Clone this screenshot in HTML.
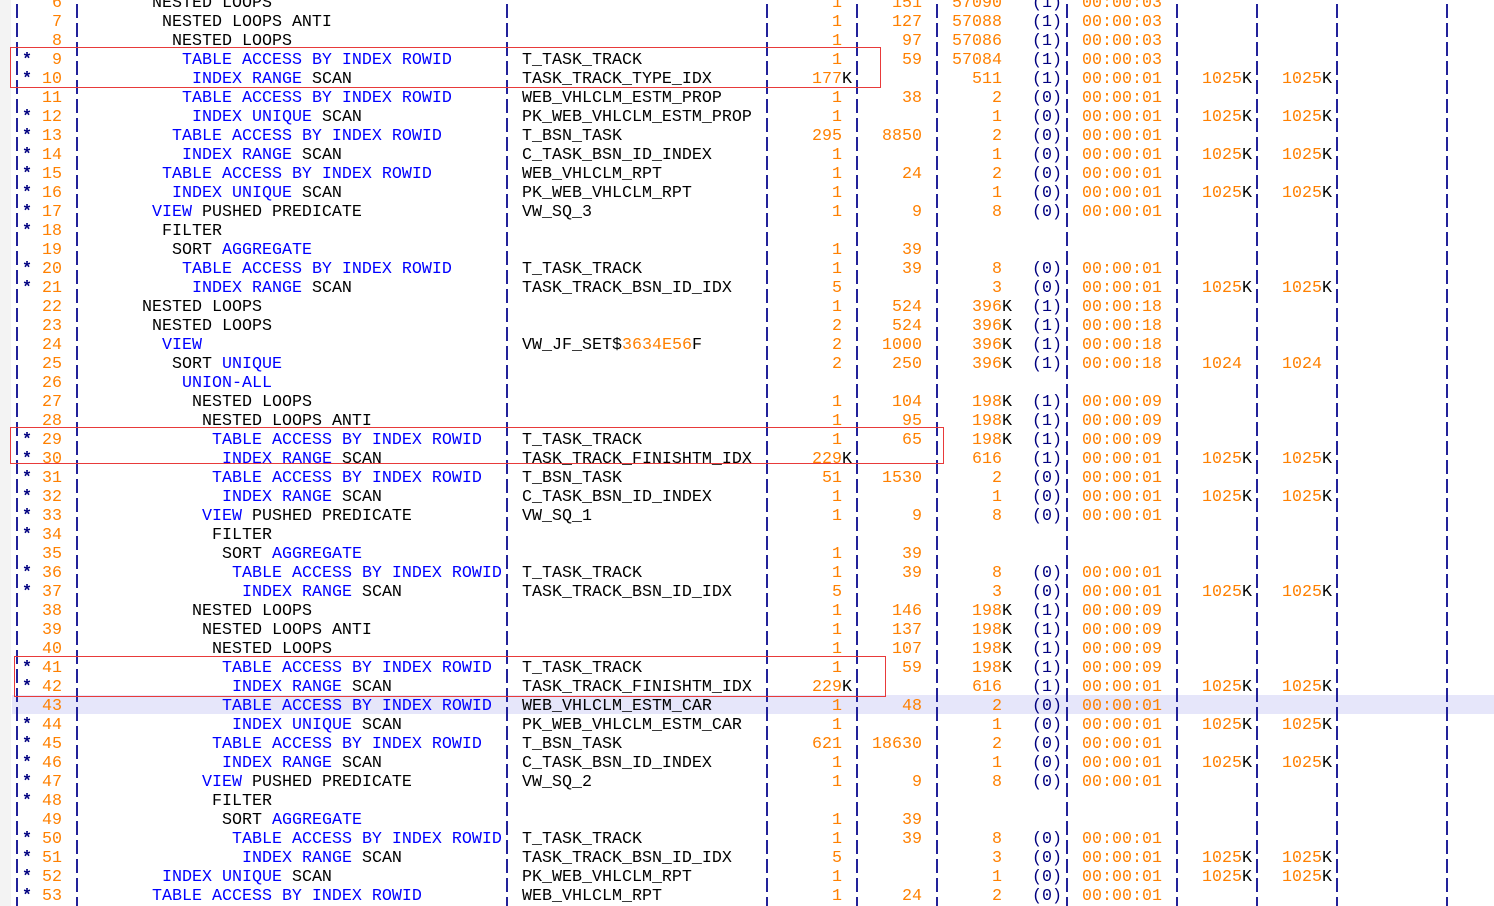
<!DOCTYPE html>
<html><head><meta charset="utf-8"><style>
html,body{margin:0;padding:0;background:#fff;width:1494px;height:906px;overflow:hidden;position:relative}
.m{position:absolute;left:0;top:0;width:11px;height:906px;background:#f3f3f3}
.hl{position:absolute;left:12px;top:694.5px;width:1482px;height:19px;background:#e6e6fa}
.w{position:absolute;left:0;top:-6.5px;width:1494px;font-family:"Liberation Mono","Courier New",monospace;font-size:16.667px;line-height:19px}
.r{position:relative;height:19px;white-space:pre}
.r span,.r i,.r b{position:absolute;top:0;font-style:normal;font-weight:normal;white-space:pre}
.r i{left:22px;color:#000080;font-weight:bold}
.r b{left:32px;width:30px;text-align:right;color:#ff8000}
em{font-style:normal;color:#0000ff}
u{text-decoration:none;color:#000}
.o{color:#000}
.nm{left:522px;color:#000}
.ro{left:772px;width:80px;text-align:right;color:#ff8000}
.by{left:862px;width:60px;text-align:right;color:#ff8000}
.co{left:942px;width:70px;text-align:right;color:#ff8000}
.pc{left:1032px;color:#000080}
.tm{left:1082px;color:#ff8000}
.c1{left:1182px;width:70px;text-align:right;color:#ff8000}
.c2{left:1262px;width:70px;text-align:right;color:#ff8000}
.n{color:#ff8000}
.p{position:absolute;top:0;width:2px;height:906px;background:repeating-linear-gradient(to bottom,transparent 0,transparent 4px,#22229a 4px,#22229a 18px,transparent 18px,transparent 19px)}
.bx{position:absolute;border:1px solid #e83a3a}
</style></head><body>
<div class="m"></div>
<div class="hl"></div>
<div class="p" style="left:16px"></div><div class="p" style="left:76px"></div><div class="p" style="left:506px"></div><div class="p" style="left:766px"></div><div class="p" style="left:856px"></div><div class="p" style="left:936px"></div><div class="p" style="left:1066px"></div><div class="p" style="left:1176px"></div><div class="p" style="left:1256px"></div><div class="p" style="left:1336px"></div><div class="p" style="left:1446px"></div>
<div class="w">
<div class="r"><b>6</b><span class="o" style="left:152px">NESTED LOOPS</span><span class="ro">1 </span><span class="by">151</span><span class="co">57090 </span><span class="pc">(1)</span><span class="tm">00:00:03</span></div>
<div class="r"><b>7</b><span class="o" style="left:162px">NESTED LOOPS ANTI</span><span class="ro">1 </span><span class="by">127</span><span class="co">57088 </span><span class="pc">(1)</span><span class="tm">00:00:03</span></div>
<div class="r"><b>8</b><span class="o" style="left:172px">NESTED LOOPS</span><span class="ro">1 </span><span class="by">97</span><span class="co">57086 </span><span class="pc">(1)</span><span class="tm">00:00:03</span></div>
<div class="r"><i>*</i><b>9</b><span class="o" style="left:182px"><em>TABLE ACCESS BY INDEX ROWID</em></span><span class="nm">T_TASK_TRACK</span><span class="ro">1 </span><span class="by">59</span><span class="co">57084 </span><span class="pc">(1)</span><span class="tm">00:00:03</span></div>
<div class="r"><i>*</i><b>10</b><span class="o" style="left:192px"><em>INDEX RANGE</em> SCAN</span><span class="nm">TASK_TRACK_TYPE_IDX</span><span class="ro">177<u>K</u></span><span class="co">511 </span><span class="pc">(1)</span><span class="tm">00:00:01</span><span class="c1">1025<u>K</u></span><span class="c2">1025<u>K</u></span></div>
<div class="r"><b>11</b><span class="o" style="left:182px"><em>TABLE ACCESS BY INDEX ROWID</em></span><span class="nm">WEB_VHLCLM_ESTM_PROP</span><span class="ro">1 </span><span class="by">38</span><span class="co">2 </span><span class="pc">(0)</span><span class="tm">00:00:01</span></div>
<div class="r"><i>*</i><b>12</b><span class="o" style="left:192px"><em>INDEX UNIQUE</em> SCAN</span><span class="nm">PK_WEB_VHLCLM_ESTM_PROP</span><span class="ro">1 </span><span class="co">1 </span><span class="pc">(0)</span><span class="tm">00:00:01</span><span class="c1">1025<u>K</u></span><span class="c2">1025<u>K</u></span></div>
<div class="r"><i>*</i><b>13</b><span class="o" style="left:172px"><em>TABLE ACCESS BY INDEX ROWID</em></span><span class="nm">T_BSN_TASK</span><span class="ro">295 </span><span class="by">8850</span><span class="co">2 </span><span class="pc">(0)</span><span class="tm">00:00:01</span></div>
<div class="r"><i>*</i><b>14</b><span class="o" style="left:182px"><em>INDEX RANGE</em> SCAN</span><span class="nm">C_TASK_BSN_ID_INDEX</span><span class="ro">1 </span><span class="co">1 </span><span class="pc">(0)</span><span class="tm">00:00:01</span><span class="c1">1025<u>K</u></span><span class="c2">1025<u>K</u></span></div>
<div class="r"><i>*</i><b>15</b><span class="o" style="left:162px"><em>TABLE ACCESS BY INDEX ROWID</em></span><span class="nm">WEB_VHLCLM_RPT</span><span class="ro">1 </span><span class="by">24</span><span class="co">2 </span><span class="pc">(0)</span><span class="tm">00:00:01</span></div>
<div class="r"><i>*</i><b>16</b><span class="o" style="left:172px"><em>INDEX UNIQUE</em> SCAN</span><span class="nm">PK_WEB_VHLCLM_RPT</span><span class="ro">1 </span><span class="co">1 </span><span class="pc">(0)</span><span class="tm">00:00:01</span><span class="c1">1025<u>K</u></span><span class="c2">1025<u>K</u></span></div>
<div class="r"><i>*</i><b>17</b><span class="o" style="left:152px"><em>VIEW</em> PUSHED PREDICATE</span><span class="nm">VW_SQ_3</span><span class="ro">1 </span><span class="by">9</span><span class="co">8 </span><span class="pc">(0)</span><span class="tm">00:00:01</span></div>
<div class="r"><i>*</i><b>18</b><span class="o" style="left:162px">FILTER</span></div>
<div class="r"><b>19</b><span class="o" style="left:172px">SORT <em>AGGREGATE</em></span><span class="ro">1 </span><span class="by">39</span></div>
<div class="r"><i>*</i><b>20</b><span class="o" style="left:182px"><em>TABLE ACCESS BY INDEX ROWID</em></span><span class="nm">T_TASK_TRACK</span><span class="ro">1 </span><span class="by">39</span><span class="co">8 </span><span class="pc">(0)</span><span class="tm">00:00:01</span></div>
<div class="r"><i>*</i><b>21</b><span class="o" style="left:192px"><em>INDEX RANGE</em> SCAN</span><span class="nm">TASK_TRACK_BSN_ID_IDX</span><span class="ro">5 </span><span class="co">3 </span><span class="pc">(0)</span><span class="tm">00:00:01</span><span class="c1">1025<u>K</u></span><span class="c2">1025<u>K</u></span></div>
<div class="r"><b>22</b><span class="o" style="left:142px">NESTED LOOPS</span><span class="ro">1 </span><span class="by">524</span><span class="co">396<u>K</u></span><span class="pc">(1)</span><span class="tm">00:00:18</span></div>
<div class="r"><b>23</b><span class="o" style="left:152px">NESTED LOOPS</span><span class="ro">2 </span><span class="by">524</span><span class="co">396<u>K</u></span><span class="pc">(1)</span><span class="tm">00:00:18</span></div>
<div class="r"><b>24</b><span class="o" style="left:162px"><em>VIEW</em></span><span class="nm">VW_JF_SET$<span class="n" style="position:static">3634E56</span>F</span><span class="ro">2 </span><span class="by">1000</span><span class="co">396<u>K</u></span><span class="pc">(1)</span><span class="tm">00:00:18</span></div>
<div class="r"><b>25</b><span class="o" style="left:172px">SORT <em>UNIQUE</em></span><span class="ro">2 </span><span class="by">250</span><span class="co">396<u>K</u></span><span class="pc">(1)</span><span class="tm">00:00:18</span><span class="c1">1024 </span><span class="c2">1024 </span></div>
<div class="r"><b>26</b><span class="o" style="left:182px"><em>UNION-ALL</em></span></div>
<div class="r"><b>27</b><span class="o" style="left:192px">NESTED LOOPS</span><span class="ro">1 </span><span class="by">104</span><span class="co">198<u>K</u></span><span class="pc">(1)</span><span class="tm">00:00:09</span></div>
<div class="r"><b>28</b><span class="o" style="left:202px">NESTED LOOPS ANTI</span><span class="ro">1 </span><span class="by">95</span><span class="co">198<u>K</u></span><span class="pc">(1)</span><span class="tm">00:00:09</span></div>
<div class="r"><i>*</i><b>29</b><span class="o" style="left:212px"><em>TABLE ACCESS BY INDEX ROWID</em></span><span class="nm">T_TASK_TRACK</span><span class="ro">1 </span><span class="by">65</span><span class="co">198<u>K</u></span><span class="pc">(1)</span><span class="tm">00:00:09</span></div>
<div class="r"><i>*</i><b>30</b><span class="o" style="left:222px"><em>INDEX RANGE</em> SCAN</span><span class="nm">TASK_TRACK_FINISHTM_IDX</span><span class="ro">229<u>K</u></span><span class="co">616 </span><span class="pc">(1)</span><span class="tm">00:00:01</span><span class="c1">1025<u>K</u></span><span class="c2">1025<u>K</u></span></div>
<div class="r"><i>*</i><b>31</b><span class="o" style="left:212px"><em>TABLE ACCESS BY INDEX ROWID</em></span><span class="nm">T_BSN_TASK</span><span class="ro">51 </span><span class="by">1530</span><span class="co">2 </span><span class="pc">(0)</span><span class="tm">00:00:01</span></div>
<div class="r"><i>*</i><b>32</b><span class="o" style="left:222px"><em>INDEX RANGE</em> SCAN</span><span class="nm">C_TASK_BSN_ID_INDEX</span><span class="ro">1 </span><span class="co">1 </span><span class="pc">(0)</span><span class="tm">00:00:01</span><span class="c1">1025<u>K</u></span><span class="c2">1025<u>K</u></span></div>
<div class="r"><i>*</i><b>33</b><span class="o" style="left:202px"><em>VIEW</em> PUSHED PREDICATE</span><span class="nm">VW_SQ_1</span><span class="ro">1 </span><span class="by">9</span><span class="co">8 </span><span class="pc">(0)</span><span class="tm">00:00:01</span></div>
<div class="r"><i>*</i><b>34</b><span class="o" style="left:212px">FILTER</span></div>
<div class="r"><b>35</b><span class="o" style="left:222px">SORT <em>AGGREGATE</em></span><span class="ro">1 </span><span class="by">39</span></div>
<div class="r"><i>*</i><b>36</b><span class="o" style="left:232px"><em>TABLE ACCESS BY INDEX ROWID</em></span><span class="nm">T_TASK_TRACK</span><span class="ro">1 </span><span class="by">39</span><span class="co">8 </span><span class="pc">(0)</span><span class="tm">00:00:01</span></div>
<div class="r"><i>*</i><b>37</b><span class="o" style="left:242px"><em>INDEX RANGE</em> SCAN</span><span class="nm">TASK_TRACK_BSN_ID_IDX</span><span class="ro">5 </span><span class="co">3 </span><span class="pc">(0)</span><span class="tm">00:00:01</span><span class="c1">1025<u>K</u></span><span class="c2">1025<u>K</u></span></div>
<div class="r"><b>38</b><span class="o" style="left:192px">NESTED LOOPS</span><span class="ro">1 </span><span class="by">146</span><span class="co">198<u>K</u></span><span class="pc">(1)</span><span class="tm">00:00:09</span></div>
<div class="r"><b>39</b><span class="o" style="left:202px">NESTED LOOPS ANTI</span><span class="ro">1 </span><span class="by">137</span><span class="co">198<u>K</u></span><span class="pc">(1)</span><span class="tm">00:00:09</span></div>
<div class="r"><b>40</b><span class="o" style="left:212px">NESTED LOOPS</span><span class="ro">1 </span><span class="by">107</span><span class="co">198<u>K</u></span><span class="pc">(1)</span><span class="tm">00:00:09</span></div>
<div class="r"><i>*</i><b>41</b><span class="o" style="left:222px"><em>TABLE ACCESS BY INDEX ROWID</em></span><span class="nm">T_TASK_TRACK</span><span class="ro">1 </span><span class="by">59</span><span class="co">198<u>K</u></span><span class="pc">(1)</span><span class="tm">00:00:09</span></div>
<div class="r"><i>*</i><b>42</b><span class="o" style="left:232px"><em>INDEX RANGE</em> SCAN</span><span class="nm">TASK_TRACK_FINISHTM_IDX</span><span class="ro">229<u>K</u></span><span class="co">616 </span><span class="pc">(1)</span><span class="tm">00:00:01</span><span class="c1">1025<u>K</u></span><span class="c2">1025<u>K</u></span></div>
<div class="r"><b>43</b><span class="o" style="left:222px"><em>TABLE ACCESS BY INDEX ROWID</em></span><span class="nm">WEB_VHLCLM_ESTM_CAR</span><span class="ro">1 </span><span class="by">48</span><span class="co">2 </span><span class="pc">(0)</span><span class="tm">00:00:01</span></div>
<div class="r"><i>*</i><b>44</b><span class="o" style="left:232px"><em>INDEX UNIQUE</em> SCAN</span><span class="nm">PK_WEB_VHLCLM_ESTM_CAR</span><span class="ro">1 </span><span class="co">1 </span><span class="pc">(0)</span><span class="tm">00:00:01</span><span class="c1">1025<u>K</u></span><span class="c2">1025<u>K</u></span></div>
<div class="r"><i>*</i><b>45</b><span class="o" style="left:212px"><em>TABLE ACCESS BY INDEX ROWID</em></span><span class="nm">T_BSN_TASK</span><span class="ro">621 </span><span class="by">18630</span><span class="co">2 </span><span class="pc">(0)</span><span class="tm">00:00:01</span></div>
<div class="r"><i>*</i><b>46</b><span class="o" style="left:222px"><em>INDEX RANGE</em> SCAN</span><span class="nm">C_TASK_BSN_ID_INDEX</span><span class="ro">1 </span><span class="co">1 </span><span class="pc">(0)</span><span class="tm">00:00:01</span><span class="c1">1025<u>K</u></span><span class="c2">1025<u>K</u></span></div>
<div class="r"><i>*</i><b>47</b><span class="o" style="left:202px"><em>VIEW</em> PUSHED PREDICATE</span><span class="nm">VW_SQ_2</span><span class="ro">1 </span><span class="by">9</span><span class="co">8 </span><span class="pc">(0)</span><span class="tm">00:00:01</span></div>
<div class="r"><i>*</i><b>48</b><span class="o" style="left:212px">FILTER</span></div>
<div class="r"><b>49</b><span class="o" style="left:222px">SORT <em>AGGREGATE</em></span><span class="ro">1 </span><span class="by">39</span></div>
<div class="r"><i>*</i><b>50</b><span class="o" style="left:232px"><em>TABLE ACCESS BY INDEX ROWID</em></span><span class="nm">T_TASK_TRACK</span><span class="ro">1 </span><span class="by">39</span><span class="co">8 </span><span class="pc">(0)</span><span class="tm">00:00:01</span></div>
<div class="r"><i>*</i><b>51</b><span class="o" style="left:242px"><em>INDEX RANGE</em> SCAN</span><span class="nm">TASK_TRACK_BSN_ID_IDX</span><span class="ro">5 </span><span class="co">3 </span><span class="pc">(0)</span><span class="tm">00:00:01</span><span class="c1">1025<u>K</u></span><span class="c2">1025<u>K</u></span></div>
<div class="r"><i>*</i><b>52</b><span class="o" style="left:162px"><em>INDEX UNIQUE</em> SCAN</span><span class="nm">PK_WEB_VHLCLM_RPT</span><span class="ro">1 </span><span class="co">1 </span><span class="pc">(0)</span><span class="tm">00:00:01</span><span class="c1">1025<u>K</u></span><span class="c2">1025<u>K</u></span></div>
<div class="r"><i>*</i><b>53</b><span class="o" style="left:152px"><em>TABLE ACCESS BY INDEX ROWID</em></span><span class="nm">WEB_VHLCLM_RPT</span><span class="ro">1 </span><span class="by">24</span><span class="co">2 </span><span class="pc">(0)</span><span class="tm">00:00:01</span></div>
</div>
<div class="bx" style="left:10px;top:47px;width:869px;height:39px"></div>
<div class="bx" style="left:10px;top:427px;width:932px;height:35px"></div>
<div class="bx" style="left:14px;top:656px;width:870px;height:39px"></div>
</body></html>
